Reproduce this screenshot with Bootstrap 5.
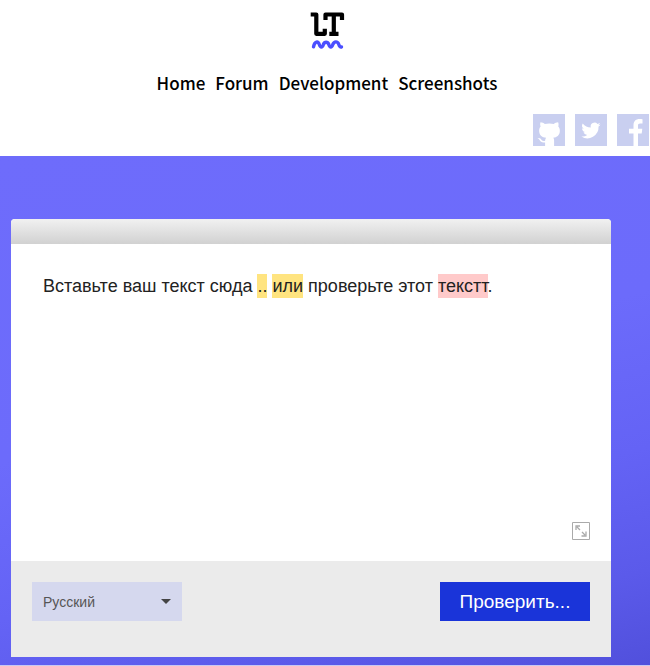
<!DOCTYPE html>
<html lang="ru">
<head>
<meta charset="utf-8">
<meta name="viewport" content="width=device-width, initial-scale=1">
<title>LanguageTool</title>
<link href="https://cdn.jsdelivr.net/npm/bootstrap@5.3.0/dist/css/bootstrap.min.css" rel="stylesheet">
<style>
  body { font-family: "Liberation Sans", Arial, sans-serif; background: #fff; }
  .brand-logo { padding: 11px 0 0 4px; line-height: 0; }
  .site-nav { padding: 19px 0 0 4px; column-gap: 10px; }
  .site-nav .nav-link {
    font-family: "Noto Sans CJK SC", "Noto Sans", sans-serif;
    font-size: 17px; font-weight: 500; line-height: 28px; color: #000; padding: 0;
  }
  .social { gap: 10px; padding: 17px 1px 10px; }
  .social a { width: 32px; height: 32px; background: #c9cff0; }
  .hero {
    padding: 63px 39px 8px 11px;
    background: linear-gradient(165deg, #6e6cfb 0%, #6c6bfb 45%, #6463f5 68%, #5b5aea 86%, #5150dc 100%);
    border-bottom: 1px solid #c8c8f2;
  }
  .checker { border-radius: 4px 4px 0 0; background: #fff; }
  .checker-top { height: 25px; background: linear-gradient(#f1f1f1, #d1d1d1); }
  .checker-text { min-height: 278px; padding: 30px 32px 0; font-size: 18px; line-height: 24px; color: #222; outline: 0; }
  .checker-text mark { padding: 2px 0; color: inherit; }
  .hint-style { background: #ffe480; }
  .hint-spell { background: #ffcaca; }
  .checker-tools { padding: 0 21px 21px; line-height: 0; }
  .checker-foot { background: #ebebeb; padding: 21px 21px 36px; }
  .checker-foot .form-select, .checker-foot .btn { width: 150px; height: 39px; border: 0; border-radius: 0; }
  .checker-foot .form-select {
    background-color: #d5d8ee; color: #555; font-size: 14px; padding: 2px 32px 0 11px;
    background-image: url("data:image/svg+xml,%3Csvg xmlns='http://www.w3.org/2000/svg' viewBox='0 0 10 5'%3E%3Cpath fill='%23444' d='M0 0h10L5 5z'/%3E%3C/svg%3E");
    background-size: 10px 5px; background-position: right 11px center;
  }
  .checker-foot .btn { background: #1a34d9; color: #fff; font-size: 19px; padding: 2px 0 0; }
</style>
</head>
<body>
<header>
  <div class="brand-logo text-center">
    <a href="#" aria-label="LanguageTool">
      <svg width="36" height="39" viewBox="0 0 36 39" fill="none">
        <path d="M1.700 3.500H7.300V22.800H15.800V17.800M16.500 9V3.500H33V9M24.800 3.500V22.800M20.300 22.800H29.500" stroke="#000" stroke-width="4.200" stroke-linejoin="round"/>
        <path d="M4.500 35.800C5.800 30 9 30 10.300 33.500C11.600 37 13.200 37 14.400 33.500C15.600 30.500 18.600 30.500 19.800 33.500C21 37 22.600 37 23.800 33.500C25.200 30 28.600 30 29.800 33.500C30.500 35.500 31.300 36.300 32.500 36" stroke="#4b4fff" stroke-width="3.400" stroke-linecap="round"/>
      </svg>
    </a>
  </div>
  <nav class="site-nav nav justify-content-center">
    <a class="nav-link" href="#">Home</a>
    <a class="nav-link" href="#">Forum</a>
    <a class="nav-link" href="#">Development</a>
    <a class="nav-link" href="#">Screenshots</a>
  </nav>
  <div class="social d-flex justify-content-end">
    <a href="#" aria-label="GitHub"><svg class="d-block" width="32" height="32" viewBox="0 0 32 32"><path fill="#fff" transform="translate(0 -1)" d="M7.500 9.200c1.600 0 3.200.9 4.300 1.700 2.700-.7 6.300-.7 9 0 1.100-.8 2.700-1.700 4.300-1.700.6 1.500.6 3 .2 4.300 1.200 1.300 1.700 2.900 1.500 4.900-.3 4-2.800 5.700-6.600 6.300.7.800.9 1.700.9 3V33h-9v-3.600c-3.200.5-4.600-.7-5.500-2.300-.5-.9-1.200-1.500-2.200-2 2.300-.6 3.400.6 4.200 1.800.9 1 2 1.200 3.500.8.100-1.200.4-2.200 1-3-3.900-.5-6.500-2.200-6.900-6.300-.2-2 .3-3.600 1.400-4.900-.5-1.300-.6-2.800-.1-4.300z"/></svg></a>
    <a href="#" aria-label="Twitter"><svg class="d-block" width="32" height="32" viewBox="0 0 32 32"><path fill="#fff" transform="translate(6.600 6.600) scale(.8)" d="M23.600 4.900a10 10 0 0 1-2.800.8 4.900 4.900 0 0 0 2.200-2.700 10 10 0 0 1-3.100 1.200 4.900 4.900 0 0 0-8.400 4.500A14 14 0 0 1 1.400 3.500a4.900 4.900 0 0 0 1.500 6.600 5 5 0 0 1-2.200-.6 4.900 4.900 0 0 0 3.900 4.900 5 5 0 0 1-2.200.1 4.900 4.900 0 0 0 4.600 3.400A9.900 9.900 0 0 1-.3 19.900 14 14 0 0 0 21.200 7.500a10 10 0 0 0 2.400-2.600z"/></svg></a>
    <a href="#" aria-label="Facebook"><svg class="d-block" width="32" height="32" viewBox="0 0 32 32"><path fill="#fff" d="M16.500 32V19.500H12v-4.700h4.500v-3.600C16.500 7 19 5 22.500 5c1.300 0 2.500.1 3 .2v4.300h-2.300c-1.800 0-2.200.9-2.200 2.200v3.100h4.300l-.6 4.700H21V32z"/></svg></a>
  </div>
</header>
<main class="hero">
  <form class="checker overflow-hidden" onsubmit="return false">
    <div class="checker-top"></div>
    <div class="checker-text" contenteditable="true" spellcheck="false" role="textbox" aria-multiline="true" aria-label="Текст">Вставьте ваш текст сюда <mark class="hint-style">..</mark> <mark class="hint-style">или</mark> проверьте этот <mark class="hint-spell">текстт</mark>.</div>
    <div class="checker-tools d-flex justify-content-end">
      <button type="button" class="border-0 bg-transparent p-0" aria-label="Во весь экран">
        <svg class="d-block" width="18" height="18" viewBox="0 0 18 18" fill="none" stroke="#aaa"><path d="M.5.500h17v17H.500z"/><path d="M4 8V4h4M5 5l3 3M14 9.500V14h-4.500M13 13l-3-3" stroke-width="1.300"/></svg>
      </button>
    </div>
    <div class="checker-foot d-flex flex-wrap justify-content-between gap-2">
      <select class="form-select" aria-label="Язык"><option>Русский</option></select>
      <button type="submit" class="btn">Проверить...</button>
    </div>
  </form>
</main>
<script src="https://cdn.jsdelivr.net/npm/bootstrap@5.3.0/dist/js/bootstrap.bundle.min.js"></script>
</body>
</html>
